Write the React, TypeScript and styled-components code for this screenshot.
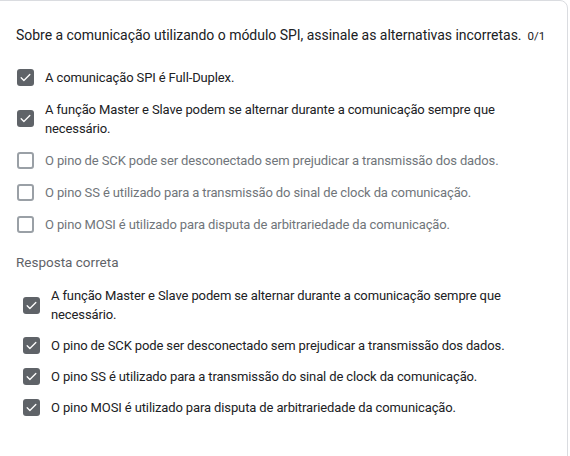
import React from "react";
import styled, { createGlobalStyle } from "styled-components";

const Global = createGlobalStyle`
  html, body { margin: 0; padding: 0; background: #ffffff; }
  body { font-family: Roboto, "Noto Sans", Arial, sans-serif; overflow: hidden; }
`;

const Page = styled.div`
  width: 570px;
  height: 456px;
  overflow: hidden;
  background: #ffffff;
`;

const Card = styled.section`
  box-sizing: border-box;
  width: 578px;
  height: 470px;
  margin-left: -10px;
  padding: 24px 22px 0 25px;
  background: #ffffff;
  border: 1px solid #dadce0;
  border-radius: 8px;
`;

const QuestionRow = styled.div`
  display: flex;
  align-items: baseline;
  justify-content: space-between;
  gap: 6px;
`;

const QuestionText = styled.div`
  font-size: 14px;
  line-height: 20px;
  color: #202124;
  letter-spacing: -0.03px;
  white-space: nowrap;
`;

const Score = styled.div`
  font-size: 11.5px;
  color: #202124;
`;

const OptionList = styled.div<{ $indent: number; $top: number; $pad: number }>`
  display: flex;
  flex-direction: column;
  margin-top: ${(p) => p.$top}px;
  padding-left: ${(p) => p.$indent}px;

  & > label {
    padding: ${(p) => p.$pad}px 0;
  }
`;

const Option = styled.label`
  display: flex;
  align-items: center;
  gap: 11px;
`;

const Box = styled.span<{ $checked: boolean }>`
  flex: none;
  box-sizing: border-box;
  width: 17px;
  height: 17px;
  border-radius: 3px;
  display: flex;
  align-items: center;
  justify-content: center;
  background: ${(p) => (p.$checked ? "#5f6368" : "#ffffff")};
  border: ${(p) => (p.$checked ? "none" : "2px solid #9aa0a6")};
`;

const OptionText = styled.span<{ $muted: boolean }>`
  font-size: 13px;
  line-height: 19px;
  letter-spacing: -0.12px;
  color: ${(p) => (p.$muted ? "#70757a" : "#202124")};
  max-width: 480px;
`;

const SectionLabel = styled.div`
  margin-top: 13px;
  font-size: 13.5px;
  line-height: 18px;
  color: #5f6368;
`;

const Check = () => (
  <svg width="13" height="13" viewBox="0 0 24 24" aria-hidden="true">
    <path d="M4 12.5l5 5L20 6.5" fill="none" stroke="#ffffff" strokeWidth="2.4" strokeLinecap="round" strokeLinejoin="round" />
  </svg>
);

const answers = [
  { text: "A comunicação SPI é Full-Duplex.", checked: true },
  { text: "A função Master e Slave podem se alternar durante a comunicação sempre que necessário.", checked: true },
  { text: "O pino de SCK pode ser desconectado sem prejudicar a transmissão dos dados.", checked: false },
  { text: "O pino SS é utilizado para a transmissão do sinal de clock da comunicação.", checked: false },
  { text: "O pino MOSI é utilizado para disputa de arbitrariedade da comunicação.", checked: false },
];

const correct = [
  "A função Master e Slave podem se alternar durante a comunicação sempre que necessário.",
  "O pino de SCK pode ser desconectado sem prejudicar a transmissão dos dados.",
  "O pino SS é utilizado para a transmissão do sinal de clock da comunicação.",
  "O pino MOSI é utilizado para disputa de arbitrariedade da comunicação.",
];

export default function App() {
  return (
    <Page>
      <Global />
      <Card>
        <QuestionRow>
          <QuestionText>
            Sobre a comunicação utilizando o módulo SPI, assinale as alternativas incorretas.
          </QuestionText>
          <Score>0/1</Score>
        </QuestionRow>
        <OptionList $indent={1} $top={16} $pad={6.5}>
          {answers.map((a) => (
            <Option key={a.text}>
              <Box $checked={a.checked}>{a.checked && <Check />}</Box>
              <OptionText $muted={!a.checked}>{a.text}</OptionText>
            </Option>
          ))}
        </OptionList>
        <SectionLabel>Resposta correta</SectionLabel>
        <OptionList $indent={7} $top={9} $pad={6}>
          {correct.map((t) => (
            <Option key={t}>
              <Box $checked>
                <Check />
              </Box>
              <OptionText $muted={false}>{t}</OptionText>
            </Option>
          ))}
        </OptionList>
      </Card>
    </Page>
  );
}
